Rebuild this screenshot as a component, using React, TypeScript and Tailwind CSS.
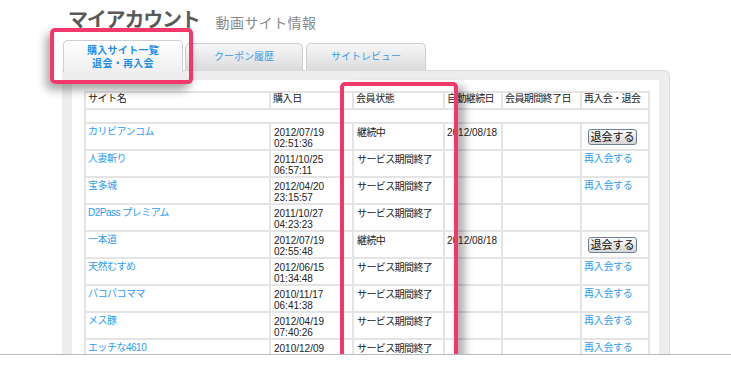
import React from 'react';

type Row = {
  name: string;
  date: string;
  time: string;
  status: string;
  renew: string;
  action: 'quit' | 'rejoin' | 'none';
};

const rows: Row[] = [
  { name: 'カリビアンコム', date: '2012/07/19', time: '02:51:36', status: '継続中', renew: '2012/08/18', action: 'quit' },
  { name: '人妻斬り', date: '2011/10/25', time: '06:57:11', status: 'サービス期間終了', renew: '', action: 'rejoin' },
  { name: '宝多城', date: '2012/04/20', time: '23:15:57', status: 'サービス期間終了', renew: '', action: 'rejoin' },
  { name: 'D2Pass プレミアム', date: '2011/10/27', time: '04:23:23', status: 'サービス期間終了', renew: '', action: 'none' },
  { name: '一本道', date: '2012/07/19', time: '02:55:48', status: '継続中', renew: '2012/08/18', action: 'quit' },
  { name: '天然むすめ', date: '2012/06/15', time: '01:34:48', status: 'サービス期間終了', renew: '', action: 'rejoin' },
  { name: 'パコパコママ', date: '2010/11/17', time: '06:41:38', status: 'サービス期間終了', renew: '', action: 'rejoin' },
  { name: 'メス豚', date: '2012/04/19', time: '07:40:26', status: 'サービス期間終了', renew: '', action: 'rejoin' },
  // last row is cut by the fold, time line falls below it
  { name: 'エッチな4610', date: '2010/12/09', time: '', status: 'サービス期間終了', renew: '', action: 'rejoin' },
];

const cell = 'border-2 border-[#e4e4e4] px-[2px] align-top';

export default function App() {
  return (
    <div className="relative w-[731px] h-[381px] overflow-hidden bg-white font-['Liberation_Sans','Noto_Sans_CJK_JP',sans-serif] text-[#222]">
      <div className="relative h-[355px] overflow-hidden border-b border-[#b8b8b8] pl-[62px]">
        {/* title */}
        <div className="flex h-[40px] items-end gap-[16px] pb-[10px] pl-[6px]">
          <div className="text-[20px] font-bold leading-none tracking-[-1.2px] text-[#5a5a5a]">マイアカウント</div>
          <div className="text-[14px] leading-none tracking-[0.4px] text-[#8a8a8a]">動画サイト情報</div>
        </div>

        {/* tabs */}
        <div className="relative z-10 flex h-[30px] items-end gap-[2px] pl-[1px]">
          <div className="flex h-[32px] w-[120px] -mb-[2px] flex-col items-center justify-center rounded-t-[5px] border border-b-0 border-[#cfcfcf] bg-gradient-to-b from-white to-[#f0f0f0] text-[10px] font-bold leading-[13px] tracking-[0.3px] text-[#1f8fe8]">
            <span>購入サイト一覧</span>
            <span>退会・再入会</span>
          </div>
          <div className="flex h-[27px] w-[118px] items-center justify-center rounded-t-[5px] border border-b-0 border-[#cfcfcf] bg-gradient-to-b from-[#f7f7f7] to-[#dcdcdc] text-[10px] leading-none text-[#3a9ee8]">
            クーポン履歴
          </div>
          <div className="ml-[1px] flex h-[27px] w-[120px] items-center justify-center rounded-t-[5px] border border-b-0 border-[#cfcfcf] bg-gradient-to-b from-[#f7f7f7] to-[#dcdcdc] text-[10px] leading-none text-[#3a9ee8]">
            サイトレビュー
          </div>
        </div>

        {/* panel */}
        <div className="w-[608px] rounded-tr-[6px] border-t border-r border-[#dcdcdc] bg-[#ededed] px-[10px] pt-[9px]">
          <div className="h-[400px] bg-white pl-[12px] pt-[11px]">
            <table className="w-[564px] table-fixed border-collapse text-[10px] leading-[11px]">
              <colgroup>
                <col className="w-[185px]" />
                <col className="w-[83px]" />
                <col className="w-[91px]" />
                <col className="w-[58px]" />
                <col className="w-[79px]" />
                <col className="w-[68px]" />
              </colgroup>
              <thead>
                <tr className="h-[17px]">
                  <th className={`${cell} text-left align-middle font-normal tracking-[-0.4px]`}>サイト名</th>
                  <th className={`${cell} text-left align-middle font-normal tracking-[-0.4px]`}>購入日</th>
                  <th className={`${cell} text-left align-middle font-normal tracking-[-0.4px]`}>会員状態</th>
                  <th className={`${cell} text-left align-middle font-normal tracking-[-0.6px]`}>自動継続日</th>
                  <th className={`${cell} text-left align-middle font-normal tracking-[-0.6px]`}>会員期間終了日</th>
                  <th className={`${cell} text-left align-middle font-normal tracking-[-0.6px]`}>再入会・退会</th>
                </tr>
              </thead>
              <tbody>
                <tr className="h-[14px]">
                  <td colSpan={6} className="border-2 border-[#e4e4e4]" />
                </tr>
                {rows.map((r) => (
                  <tr key={r.name} className="h-[27px]">
                    <td className={`${cell} pt-[2px] tracking-[-0.5px] text-[#2e9cf0]`}>{r.name}</td>
                    <td className={`${cell} pt-[3px] pl-[3px]`}>
                      <div>{r.date}</div>
                      {r.time && <div>{r.time}</div>}
                    </td>
                    <td className={`${cell} pt-[3px] pl-[3px] tracking-[-0.6px]`}>{r.status}</td>
                    <td className={`${cell} pt-[3px]`}>{r.renew}</td>
                    <td className={cell} />
                    <td className={`${cell} pt-[2px]`}>
                      {r.action === 'quit' && (
                        <div className="pt-[3px] pl-[4px]">
                          <span className="inline-flex h-[16px] w-[49px] items-center justify-center rounded-[3px] border border-[#6f7f96] bg-gradient-to-b from-[#fbfbfb] to-[#d6d6d6] text-[11px] leading-none text-[#111]">
                            退会する
                          </span>
                        </div>
                      )}
                      {r.action === 'rejoin' && (
                        <span className="tracking-[-0.3px] text-[#2e9cf0]">再入会する</span>
                      )}
                    </td>
                  </tr>
                ))}
              </tbody>
            </table>
          </div>
        </div>

        {/* highlight around active tab */}
        <div className="absolute left-[50px] top-[28px] z-20 h-[56px] w-[143px] rounded-[5px] border-[4px] border-[#f2386b] shadow-[-4px_6px_10px_rgba(0,0,0,0.35)]" />
        {/* highlight around status column */}
        <div className="absolute left-[340px] top-[82px] z-20 h-[300px] w-[118px] rounded-[5px] border-[4px] border-[#f2386b] shadow-[7px_4px_9px_rgba(0,0,0,0.3)]" />
      </div>
    </div>
  );
}
